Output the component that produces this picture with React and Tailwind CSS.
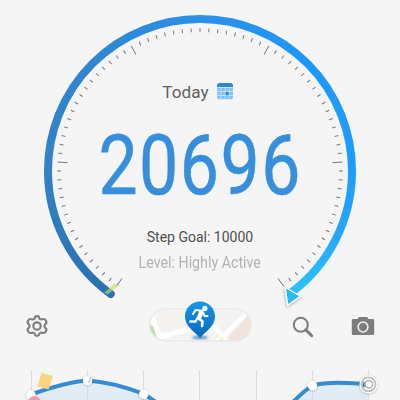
const TICK_STEP = 3.6

function Ticks() {
  const ticks = []
  for (let i = -40; i <= 40; i++) {
    const major = Math.abs(i) % 16 === 8
    ticks.push(
      <line
        key={i}
        x1="200"
        x2="200"
        y1="28.2"
        y2={major ? 38.2 : 32}
        stroke={major ? "#6e6e6e" : "#777"}
        strokeWidth={major ? 0.9 : 1}
        transform={`rotate(${i * TICK_STEP} 200 171)`}
      />
    )
  }
  return <g>{ticks}</g>
}

function Gauge() {
  return (
    <svg width="400" height="312" viewBox="0 0 400 312" className="absolute inset-0">
      <defs>
        <linearGradient id="left" gradientUnits="userSpaceOnUse" x1="0" y1="294" x2="0" y2="171">
          <stop offset="0" stopColor="#2b71b1" />
          <stop offset="1" stopColor="#3083ca" />
        </linearGradient>
        <linearGradient id="top" gradientUnits="userSpaceOnUse" x1="48" y1="0" x2="352" y2="0">
          <stop offset="0" stopColor="#3083ca" />
          <stop offset="0.5" stopColor="#2b90e8" />
          <stop offset="0.8" stopColor="#1e97f8" />
          <stop offset="1" stopColor="#209bff" />
        </linearGradient>
        <linearGradient id="right" gradientUnits="userSpaceOnUse" x1="0" y1="171" x2="0" y2="294">
          <stop offset="0" stopColor="#209bff" />
          <stop offset="0.5" stopColor="#25a6ff" />
          <stop offset="1" stopColor="#2dc3fb" />
        </linearGradient>
        <filter id="arrowShadow" x="-50%" y="-50%" width="200%" height="200%">
          <feDropShadow dx="-0.5" dy="1.5" stdDeviation="1.5" floodOpacity="0.3" />
        </filter>
      </defs>
      <Ticks />
      <g fill="none" strokeWidth="8">
        <path d="M110.7 294A152 152 0 0 1 48 171" stroke="url(#left)" strokeLinecap="round" />
        <path d="M352 171A152 152 0 0 1 291 292.8" stroke="url(#right)" />
        <path d="M48 171.3V171A152 152 0 0 1 352 171V171.3" stroke="url(#top)" />
      </g>
      <path d="M104.5 292.5L114 284L119 285.5L107.5 294.5Z" fill="#c8dc55" fillOpacity="0.65" />
      <g filter="url(#arrowShadow)">
        <path d="M286 288.500L299.200 296.300L288.200 304Z" fill="#fff" stroke="#fff" strokeWidth="2.600" />
        <path d="M286 288.500L299.200 296.300L288.200 304Z" fill="#2bb9f2" />
      </g>
    </svg>
  )
}

function CalendarIcon() {
  const cells = []
  for (let row = 0; row < 3; row++) {
    for (let col = 0; col < 4; col++) {
      cells.push(
        <rect
          key={`${row}-${col}`}
          x={0.2 + col * 4.1}
          y={5 + row * 4}
          width="3.4"
          height="3.3"
          fill={row === 1 && col === 2 ? "#3487cc" : "#7cc2f5"}
        />
      )
    }
  }
  return (
    <svg width="16" height="17" viewBox="0 0 16 17" className="-mt-px">
      <clipPath id="calClip"><rect width="16" height="16.6" rx="2.5" /></clipPath>
      <g clipPath="url(#calClip)">
        <rect width="16" height="4.2" fill="#3487cc" />
        <rect y="4.7" width="16" height="12" fill="#d3ebfc" />
        {cells}
      </g>
    </svg>
  )
}

function MapButton() {
  return (
    <svg width="110" height="54" viewBox="145 295 110 54">
      <defs>
        <clipPath id="pill"><rect x="149.5" y="309" width="101.5" height="32" rx="16" /></clipPath>
        <linearGradient id="pin" x1="0" y1="0" x2="0" y2="1">
          <stop offset="0" stopColor="#1497e8" />
          <stop offset="1" stopColor="#0868bd" />
        </linearGradient>
        <filter id="pinBlur"><feGaussianBlur stdDeviation="1.2" /></filter>
      </defs>
      <g clipPath="url(#pill)">
        <rect x="149" y="308" width="103" height="34" fill="#f4f3f2" />
        <path d="M149 325L154 327L157 341H149Z" fill="#c4dcb0" />
        <path d="M225 341L251 312V341Z" fill="#f2e4dc" />
        <g stroke="#fff" fill="none">
          <path d="M151 314L160 337L190 329" strokeWidth="5" />
          <path d="M154 324L152 309" strokeWidth="3" />
          <path d="M251 309L213 346M210 322L229 344" strokeWidth="4.5" />
        </g>
        <path d="M217 342L221 337L227 342Z" fill="#faf1b9" />
      </g>
      <rect x="149.5" y="309" width="101.5" height="32" rx="16" fill="none" stroke="#e9e9e9" strokeWidth="1.5" />
      <ellipse cx="200" cy="337.5" rx="8" ry="2" fill="#176aa9" opacity="0.6" filter="url(#pinBlur)" />
      <path d="M200 301.5C191.700 301.500 185 308.200 185 316.500C185 326 194 331 200 338C206 331 215 326 215 316.500C215 308.200 208.300 301.500 200 301.500Z" fill="url(#pin)" />
      <circle cx="204.800" cy="308.400" r="2.600" fill="#fff" />
      <g fill="none" stroke="#fff" strokeLinecap="round" strokeLinejoin="round">
        <path d="M201.300 312L199 318" strokeWidth="4.400" />
        <path d="M201.500 310.800L195.500 310L193 314" strokeWidth="2" />
        <path d="M203 312.500L204.500 316L207.500 316" strokeWidth="2" />
        <path d="M199 318.500L202.500 321.500L202 326" strokeWidth="2.600" />
        <path d="M197.500 318L195.500 321.500L190.300 321.500" strokeWidth="2.400" />
      </g>
    </svg>
  )
}

function GearIcon() {
  return (
    <svg width="24" height="24" viewBox="0 0 24 24" fill="none" stroke="#808080" strokeLinejoin="round">
      <path
        d="M9.800 4Q10 2.200 12 2.200Q14 2.200 14.200 4Q14.600 5.400 16 5.500Q17.300 5 18.500 5Q20 5 21 6.800Q22 8.600 20.600 9.800Q19.400 10.800 19.400 12Q19.400 13.200 20.600 14.200Q22 15.400 21 17.200Q20 19 18.500 19Q17.300 19 16 18.500Q14.600 18.600 14.200 20Q14 21.800 12 21.800Q10 21.800 9.800 20Q9.400 18.600 8 18.500Q6.700 19 5.500 19Q4 19 3 17.200Q2 15.400 3.400 14.200Q4.600 13.200 4.600 12Q4.600 10.800 3.400 9.800Q2 8.600 3 6.800Q4 5 5.500 5Q6.700 5 8 5.500Q9.400 5.400 9.800 4Z"
        strokeWidth="2.200"
      />
      <circle cx="12" cy="12" r="3.700" strokeWidth="2.200" />
    </svg>
  )
}

function SearchIcon() {
  return (
    <svg width="22" height="22" viewBox="0 0 22 22" fill="none" stroke="#7d7d7d">
      <circle cx="8.800" cy="8.800" r="7" strokeWidth="2" />
      <path d="M13.800 13.800L19.700 19.700" strokeWidth="3" strokeLinecap="round" />
    </svg>
  )
}

function CameraIcon() {
  return (
    <svg width="24" height="20" viewBox="0 0 24 20">
      <path d="M2 3H6.500L7.800 1H16.200L17.500 3H22Q23.200 3 23.200 4.200V17.800Q23.200 19 22 19H2Q0.800 19 0.800 17.800V4.200Q0.800 3 2 3Z" fill="#7d7d7d" />
      <circle cx="12" cy="11" r="4.900" fill="#7d7d7d" stroke="#f4f4f4" strokeWidth="1.500" />
    </svg>
  )
}

function Toolbar() {
  return (
    <div className="flex h-[54px] items-center">
      <button className="ml-[25px] mt-2"><GearIcon /></button>
      <button className="ml-[96px]"><MapButton /></button>
      <button className="ml-[37px] mt-2.5"><SearchIcon /></button>
      <button className="ml-[37px] mt-2"><CameraIcon /></button>
    </div>
  )
}

function HistoryChart() {
  return (
    <svg width="400" height="40" viewBox="0 360 400 40" className="block">
      <defs>
        <linearGradient id="area" gradientUnits="userSpaceOnUse" x1="0" y1="378" x2="0" y2="400">
          <stop offset="0" stopColor="#e6eff6" />
          <stop offset="1" stopColor="#dfeaf4" />
        </linearGradient>
        <filter id="dotShadow" x="-50%" y="-50%" width="200%" height="200%">
          <feDropShadow dx="0" dy="0.5" stdDeviation="1.2" floodOpacity="0.3" />
        </filter>
      </defs>
      <path d="M31 395Q68 381 87.500 380Q112 382 144 394L155 402H31Z" fill="url(#area)" />
      <path d="M294 402Q306 389 313 385Q330 380 369 384.500V402Z" fill="url(#area)" />
      <g stroke="#dcdcdc" strokeWidth="1">
        {[31.5, 87.5, 143.5, 199.5, 256.5, 312.5, 368.5].map((x) => (
          <line key={x} x1={x} x2={x} y1="370" y2="400" />
        ))}
      </g>
      <g fill="none" stroke="#368bd3" strokeWidth="4">
        <path d="M31 394.500Q68 381.500 87.500 380.500Q112 382 144 394L156 402" />
        <path d="M293 402Q306 389 313 385.500Q330 380.500 369 384.500" />
      </g>
      <path d="M41.500 373L53 376L48.500 389.500L37.500 386.500Z" fill="#f9d477" fillOpacity="0.95" />
      <g fill="#fff" filter="url(#dotShadow)">
        <circle cx="31" cy="395" r="4.700" />
        <circle cx="87.500" cy="380.500" r="4.700" />
        <circle cx="143.700" cy="394.300" r="4.700" />
        <circle cx="312.500" cy="385.700" r="4.700" />
        <circle cx="368.500" cy="384.300" r="9" />
      </g>
      <path d="M88.500 383L91 377" stroke="#9bc9df" strokeWidth="1.200" />
      <circle cx="34.500" cy="402.500" r="6.500" fill="#f19bb2" />
      <circle cx="368.500" cy="384.300" r="7" fill="#fff" stroke="#bdbdbd" strokeWidth="1.800" />
      <path d="M364.500 382Q363 384.500 364.500 387" stroke="#3273a8" strokeWidth="2" fill="none" />
      <circle cx="368.800" cy="384.300" r="3.800" fill="#fff" stroke="#b2b2b2" strokeWidth="1.500" />
    </svg>
  )
}

export default function App() {
  return (
    <div className="h-[400px] w-[400px] overflow-hidden bg-[#f5f5f5] font-['Roboto',sans-serif]">
      <div className="relative h-[295px]">
        <Gauge />
        <div className="relative flex flex-col items-center pt-20">
          <div className="flex h-6 items-center gap-[8px] pr-[5px]">
            <span className="text-[17.200px] leading-6 text-[#606060]">Today</span>
            <CalendarIcon />
          </div>
          <div className="mt-5 h-[84px] scale-x-[0.84] whitespace-nowrap text-[83px] leading-[84px] tracking-[1.800px] text-[#368fdc] [-webkit-text-stroke:0.6px_#368fdc]">
            20696
          </div>
          <div className="mt-[19px] text-[14px] leading-5 text-[#505050]">Step Goal: 10000</div>
          <div className="mt-[6px] scale-x-[0.89] whitespace-nowrap text-[16px] leading-5 text-[#b3b3b3]">Level: Highly Active</div>
        </div>
      </div>
      <Toolbar />
      <div className="pt-[11px]">
        <HistoryChart />
      </div>
    </div>
  )
}
